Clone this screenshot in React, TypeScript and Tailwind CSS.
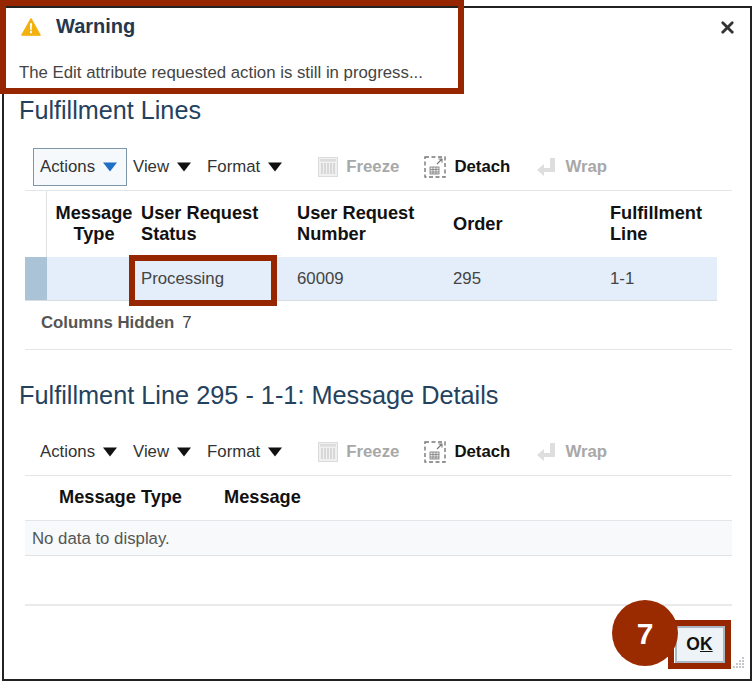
import { X } from 'lucide-react'

function Caret({ blue }: { blue?: boolean }) {
  return (
    <svg width="14" height="10" viewBox="0 0 14 10" className="shrink-0">
      <path d="M0 0.5 H14 L7 9.5 Z" fill={blue ? '#1f6fc4' : '#111'} />
    </svg>
  )
}

function FreezeIcon() {
  return (
    <svg width="20" height="20" viewBox="0 0 20 20" className="shrink-0">
      <rect x="0.5" y="0.5" width="19" height="19" fill="#f0f0f0" stroke="#dcdcdc" />
      <rect x="2" y="2" width="16" height="2.5" fill="#dcdcdc" />
      <path d="M4 6v11M7 6v11M10 6v11M13 6v11M16 6v11" stroke="#c8c8c8" strokeWidth="1.2" />
    </svg>
  )
}

function DetachIcon() {
  return (
    <svg width="22" height="22" viewBox="0 0 22 22" className="shrink-0">
      <rect x="1" y="1" width="20" height="20" fill="none" stroke="#777" strokeWidth="1.4" strokeDasharray="4 2.5" />
      <rect x="6" y="11" width="9" height="7" fill="#e8e8e8" stroke="#777" strokeWidth="0.8" />
      <path d="M6 13.5h9M6 16h9M9 11v7M12 11v7" stroke="#777" strokeWidth="0.7" />
      <path d="M13 8l5-5M14.5 3H18v3.5" fill="none" stroke="#777" strokeWidth="1.1" />
    </svg>
  )
}

function WrapIcon() {
  return (
    <svg width="19" height="20" viewBox="0 0 19 20" className="shrink-0">
      <path d="M13 1h5v14H7v4L0 13l7-6v4h6z" fill="#dedede" />
    </svg>
  )
}

function Toolbar({ active }: { active?: boolean }) {
  return (
    <div className="flex h-[48px] items-center border-b border-[#e3e6e8] pl-[8px] text-[16.8px] text-[#333]">
      <div
        className={`flex h-[38px] w-[94px] items-center gap-[8px] pl-[6px] ${
          active ? 'border border-[#7f95a8] bg-[#f5f9fc]' : 'border border-transparent'
        }`}
      >
        <span>Actions</span>
        <Caret blue={active} />
      </div>
      <span className="ml-[6px]">View</span>
      <span className="ml-[8px]"><Caret /></span>
      <span className="ml-[16px]">Format</span>
      <span className="ml-[8px]"><Caret /></span>
      <span className="ml-[36px]"><FreezeIcon /></span>
      <span className="ml-[8px] font-bold text-[#a8a8a8]">Freeze</span>
      <span className="ml-[25px]"><DetachIcon /></span>
      <span className="ml-[8px] font-bold text-[#111]">Detach</span>
      <span className="ml-[27px]"><WrapIcon /></span>
      <span className="ml-[9px] font-bold text-[#a8a8a8]">Wrap</span>
    </div>
  )
}

function ResizeGrip() {
  return (
    <svg width="14" height="14" viewBox="0 0 14 14" className="absolute bottom-[13px] right-[8px]">
      <path
        d="M11 1h2v2h-2zM8 4h2v2H8zM11 4h2v2h-2zM5 7h2v2H5zM8 7h2v2H8zM11 7h2v2h-2zM2 10h2v2H2zM5 10h2v2H5zM8 10h2v2H8zM11 10h2v2h-2z"
        fill="#c4c8cc"
      />
    </svg>
  )
}

export default function App() {
  return (
    <div
      className="relative h-[683px] w-[753px] overflow-hidden bg-white"
      style={{ fontFamily: '"Liberation Sans", Arial, sans-serif' }}
    >
      <div className="ml-[2px] mt-[6px] flex h-[675px] w-[750px] flex-col border-2 border-[#222] bg-white">
        {/* warning header */}
        <div className="flex h-[36px] items-center justify-between pl-[17px] pr-[13px]">
          <div className="flex items-center gap-[15px]">
            <svg width="20" height="20" viewBox="0 0 22 21" className="mt-[2px]">
              <path d="M11 1.5 L21 19.5 H1 Z" fill="#f2b10c" stroke="#f2b10c" strokeWidth="1.5" strokeLinejoin="round" />
              <path d="M9.8 6.5h2.4l-.4 7.5h-1.6z" fill="#fff" />
              <rect x="9.9" y="15" width="2.2" height="2.4" fill="#fff" />
            </svg>
            <span className="text-[20px] font-bold leading-none text-[#24374f]">Warning</span>
          </div>
          <X size={19} strokeWidth={3.5} className="mt-[2px] text-[#333]" />
        </div>
        <div className="mt-[17px] pl-[15px] text-[16.8px] leading-[24px] text-[#444]">
          The Edit attribute requested action is still in progress...
        </div>

        <h2 className="mt-[9px] pl-[15px] text-[25.2px] leading-[32px] text-[#24425e]">Fulfillment Lines</h2>

        <div className="ml-[21px] mr-[18px] mt-[17px]">
          <Toolbar active />
          <div className="grid h-[66px] grid-cols-[22px_94px_156px_156px_157px_1fr] items-center text-[18.2px] font-bold leading-[21px] text-[#111]">
            <div className="h-full border-r border-[#dfe3e6]" />
            <div className="text-center"><div>Message</div><div>Type</div></div>
            <div><div>User Request</div><div>Status</div></div>
            <div><div>User Request</div><div>Number</div></div>
            <div>Order</div>
            <div><div>Fulfillment</div><div>Line</div></div>
          </div>
          <div className="mr-[15px] grid h-[44px] grid-cols-[22px_94px_156px_156px_157px_1fr] items-center border-b border-[#d8dde1] bg-[#e3eefa] text-[16.8px] text-[#444]">
            <div className="h-full bg-[#abc3d7]" />
            <div />
            <div className="pt-[1px]">Processing</div>
            <div className="pt-[1px]">60009</div>
            <div className="pt-[1px]">295</div>
            <div className="pt-[1px]">1-1</div>
          </div>
          <div className="flex h-[49px] items-center gap-[8px] border-b border-[#e3e6e8] pl-[16px] pb-[4px] text-[16.8px] text-[#444]">
            <span className="font-bold text-[#555]">Columns Hidden</span>
            <span>7</span>
          </div>
        </div>

        <h2 className="mt-[29px] pl-[15px] text-[25.3px] leading-[32px] text-[#24425e]">
          Fulfillment Line 295 - 1-1: Message Details
        </h2>

        <div className="ml-[21px] mr-[18px] mt-[17px]">
          <Toolbar />
          <div className="flex h-[45px] items-center border-b border-[#e3e6e8] text-[18.2px] font-bold text-[#111]">
            <span className="ml-[34px]">Message Type</span>
            <span className="ml-[42px]">Message</span>
          </div>
          <div className="flex h-[35px] items-center border-b border-[#dfe3e6] bg-[#f7f9fb] pl-[7px] pt-[1px] text-[16.8px] text-[#555]">
            No data to display.
          </div>
          <div className="mt-[48px] border-b-2 border-[#e8eaec]" />
        </div>
      </div>

      {/* callout boxes and step badge */}
      <div className="absolute left-0 top-0 h-[94px] w-[464px] border-[6px] border-[#962600]" />
      <div className="absolute left-[129px] top-[255px] h-[51px] w-[148px] border-[6px] border-[#962600]" />
      <div className="absolute left-[668px] top-[620px] flex h-[49px] w-[63px] items-center justify-center border-[6px] border-[#962600]">
        <button className="h-[37px] w-[50px] shrink-0 border-2 border-[#aab8c4] bg-[#eef3f7] text-[17.5px] font-bold text-[#111]">
          O<span className="underline">K</span>
        </button>
      </div>
      <div className="absolute left-[612px] top-[600px] flex h-[66px] w-[66px] items-center justify-center rounded-full bg-[#9a2a00] text-[30px] font-bold text-white">
        7
      </div>
      <ResizeGrip />
    </div>
  )
}
